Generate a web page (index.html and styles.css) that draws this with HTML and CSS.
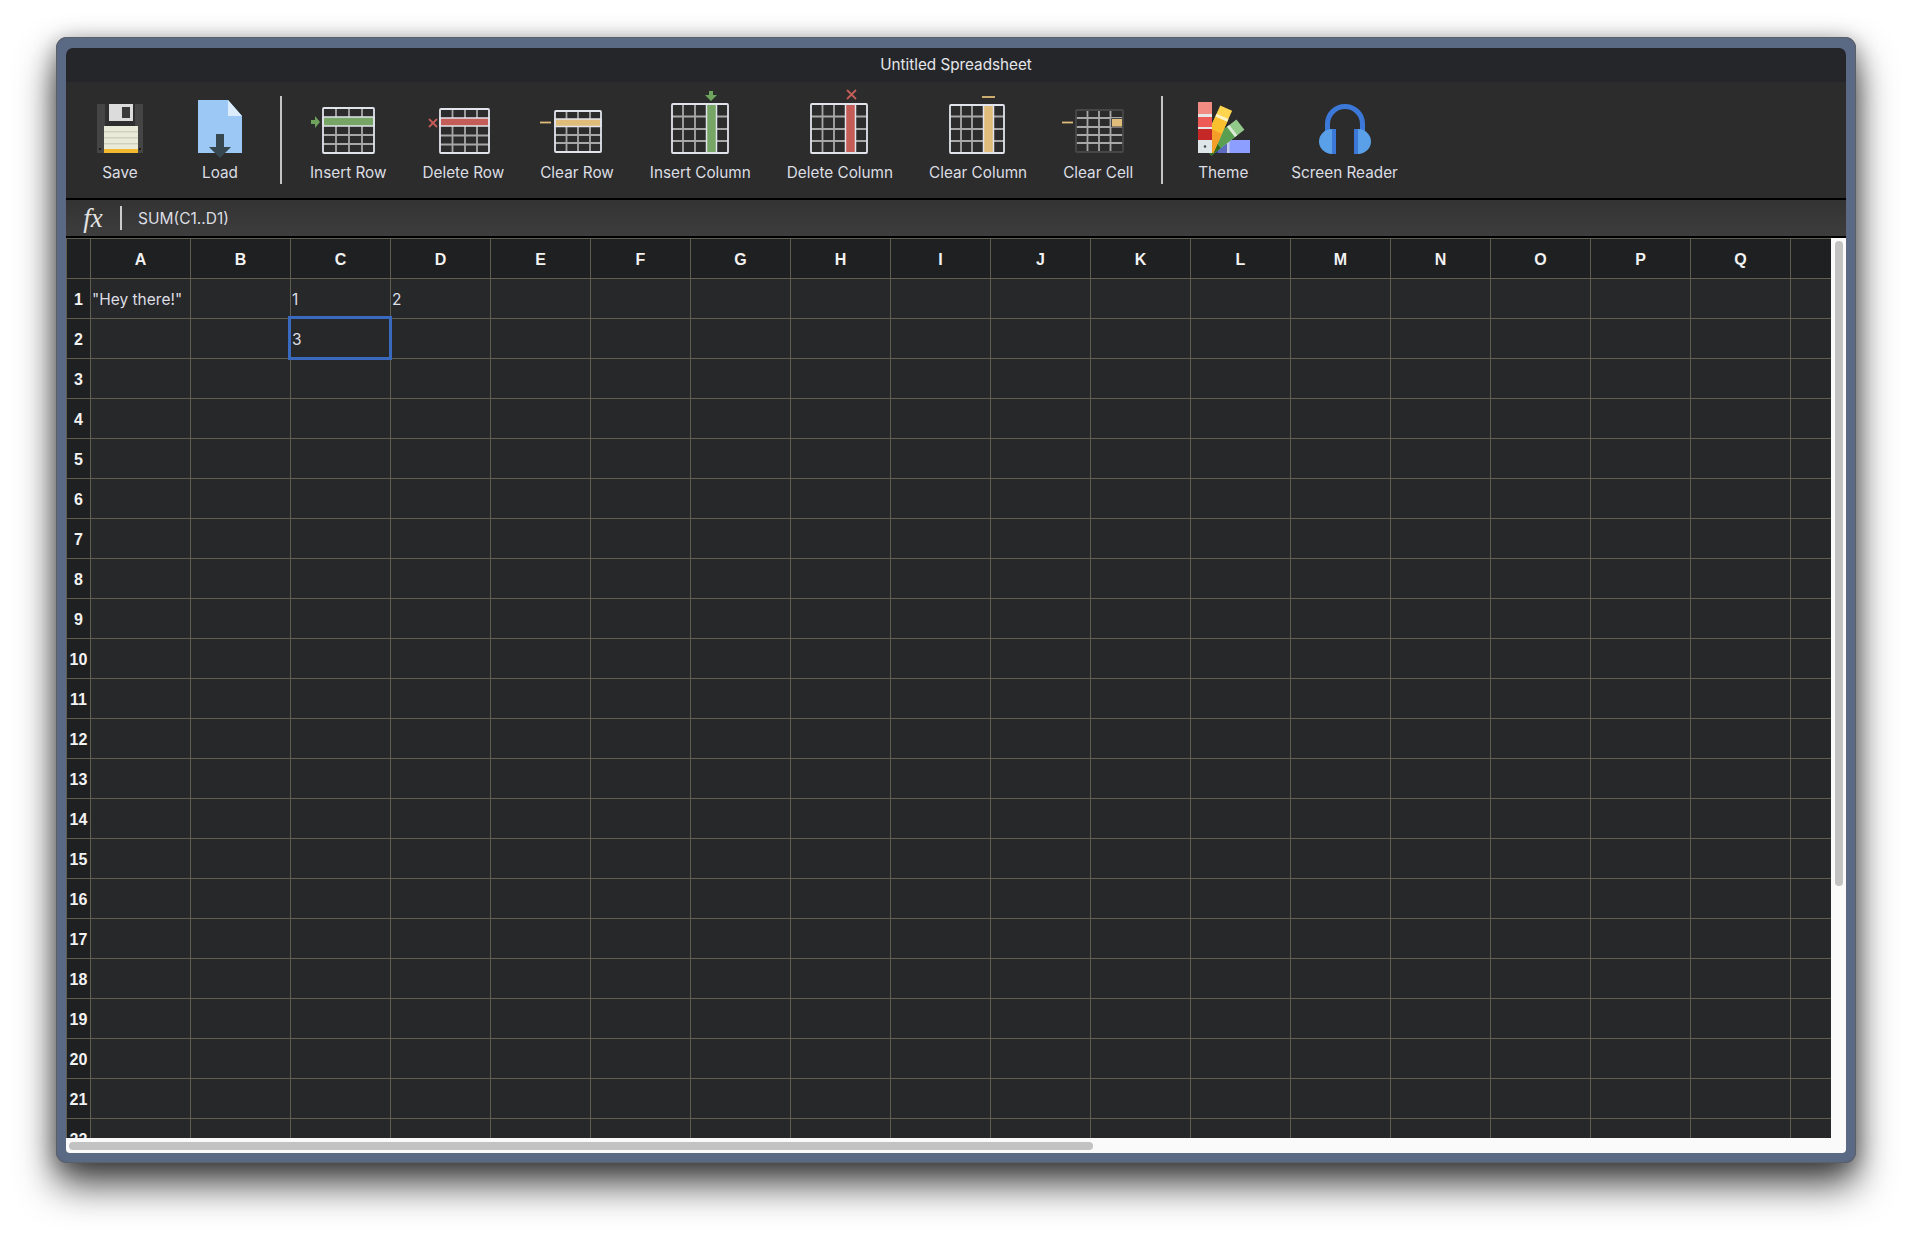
FILE: index.html
```html
<!DOCTYPE html>
<html lang="en">

<head>
    <meta charset="UTF-8">
    <title>Untitled Spreadsheet</title>
    <link rel="stylesheet" href="styles.css">
</head>

<body>
<div class="window">
    <div class="titlebar">Untitled Spreadsheet</div>

    <div class="toolbar">
        <div class="tool">
            <svg class="icon" viewBox="0 0 64 64">
                <path d="M9 8h46v49H9z" fill="#454545"/>
                <path d="M17 8h30v49H17z" fill="#2f2f2f"/>
                <path d="M21 8h24v17H21z" fill="#dcdcdc"/>
                <path d="M34 11h8v11h-8z" fill="#3a3a3a"/>
                <path d="M16 30h34v27H16z" fill="#e9ebd8"/>
                <path d="M16 35h34v1.500H16zM16 41h34v1.500H16zM16 47h34v1.500H16z" fill="#cfd3bd"/>
                <path d="M16 53h34v4H16z" fill="#f2b92f"/>
                <path d="M11 52h2v2h-2zM51 52h2v2h-2z" fill="#1c1c1c"/>
            </svg>
            <span>Save</span>
        </div>
        <div class="tool">
            <svg class="icon" viewBox="0 0 64 64">
                <path d="M10 4h30l14 16v37H10z" fill="#9bc8f5"/>
                <path d="M40 4l14 16H40z" fill="#dcecfb"/>
                <path d="M28 38h8v13h7L32 62 21 51h7z" fill="#37474f"/>
            </svg>
            <span>Load</span>
        </div>
        <div class="divider"></div>
        <div class="tool">
            <svg class="icon" viewBox="0 0 64 64">
                <path class="inner" d="M20 12v45M33 12v45M46 12v45M7 39h51M7 48h51"/>
                <path d="M7 21h51v9H7z" fill="#76a566" stroke="#e2e4ec" stroke-width="1.500"/>
                <rect class="outer" x="7" y="12" width="51" height="45" rx="1"/>
                <path d="M-5 24h4v-4l5 6-5 6v-4h-4z" fill="#6ea35e"/>
            </svg>
            <span>Insert Row</span>
        </div>
        <div class="tool">
            <svg class="icon" viewBox="0 0 64 64">
                <path class="inner" d="M21.500 13v45M34 13v45M46 13v45M9 39.500h49M9 48.500h49"/>
                <path d="M9 22h49v8H9z" fill="#c45c58" stroke="#e2e4ec" stroke-width="1.500"/>
                <rect class="outer" x="9" y="13" width="49" height="44" rx="1"/>
                <path d="M-2 23l8 8M6 23l-8 8" stroke="#c45c58" stroke-width="1.800" fill="none"/>
            </svg>
            <span>Delete Row</span>
        </div>
        <div class="tool">
            <svg class="icon" viewBox="0 0 64 64">
                <path class="inner" d="M21.500 15v42M33 15v42M45 15v42M10 39h46M10 47h46"/>
                <path d="M10 23h46v7.500H10z" fill="#dfbc79" stroke="#e2e4ec" stroke-width="1.500"/>
                <rect class="outer" x="10" y="15" width="46" height="41" rx="1"/>
                <path d="M-5 26.500H6" stroke="#dfbc79" stroke-width="1.800"/>
            </svg>
            <span>Clear Row</span>
        </div>
        <div class="tool">
            <svg class="icon" viewBox="0 0 64 64">
                <path class="inner" d="M4 20.500h56M4 33h56M4 45h56M15 8v49M27 8v49"/>
                <path d="M38.500 8h10v49h-10z" fill="#76a566" stroke="#e2e4ec" stroke-width="1.500"/>
                <rect class="outer" x="4" y="8" width="56" height="49" rx="1"/>
                <path d="M41 -5h4v4h4L43 5l-6-6h4z" fill="#6ea35e"/>
            </svg>
            <span>Insert Column</span>
        </div>
        <div class="tool">
            <svg class="icon" viewBox="0 0 64 64">
                <path class="inner" d="M3 20.500h56M3 33h56M3 45h56M14.500 8v49M26 8v49"/>
                <path d="M37.500 8h10v49h-10z" fill="#c45c58" stroke="#e2e4ec" stroke-width="1.500"/>
                <rect class="outer" x="3" y="8" width="56" height="49" rx="1"/>
                <path d="M39 -6l9 9M48 -6l-9 9" stroke="#c45c58" stroke-width="1.800" fill="none"/>
            </svg>
            <span>Delete Column</span>
        </div>
        <div class="tool">
            <svg class="icon" viewBox="0 0 64 64">
                <path class="inner" d="M4 20.500h54M4 33h54M4 45h54M15 9v48M26 9v48"/>
                <path d="M37.500 9h10v48h-10z" fill="#dfbc79" stroke="#e2e4ec" stroke-width="1.500"/>
                <rect class="outer" x="4" y="9" width="54" height="48" rx="1"/>
                <path d="M36 1h13" stroke="#dfbc79" stroke-width="1.800"/>
            </svg>
            <span>Clear Column</span>
        </div>
        <div class="tool">
            <svg class="icon" viewBox="0 0 64 64">
                <path class="inner" d="M10 22h47M10 31h47M10 39h47M10 47h47M21.500 14v42M33 14v42M44.500 14v42"/>
                <rect x="10" y="14" width="47" height="42" rx="1" fill="none" stroke="#474747" stroke-width="1.800"/>
                <path d="M45.500 22.500h11v8.500h-11z" fill="#dfbc79" stroke="#444" stroke-width="1"/>
                <path d="M-4 26.500H7" stroke="#dfbc79" stroke-width="1.800"/>
            </svg>
            <span>Clear Cell</span>
        </div>
        <div class="divider"></div>
        <div class="tool">
            <svg class="icon" viewBox="0 0 64 64">
                <path d="M22 44h37v13H22z" fill="#8c9eff"/>
                <path d="M22 44h14v13H22z" fill="#5c6bc0"/>
                <path d="M22 48h5v9h-5z" fill="#303f9f"/>
                <path d="M36 44h2.500v13H36z" fill="#c5cae9"/>
                <g transform="rotate(52 16 54)">
                    <path d="M10 12h13v42H10z" fill="#93c98a"/>
                    <path d="M10 24h13v30H10z" fill="#5a9e51"/>
                    <path d="M10 21h13v3H10z" fill="#dcebd8"/>
                    <path d="M10 42h13v12H10z" fill="#33691e"/>
                </g>
                <g transform="rotate(24 16 54)">
                    <path d="M10 8h13v46H10z" fill="#ffd54f"/>
                    <path d="M10 20h13v34H10z" fill="#fbc02d"/>
                    <path d="M10 17h13v3H10z" fill="#fff3c4"/>
                    <path d="M10 33h13v21H10z" fill="#f59f2a"/>
                </g>
                <path d="M7 6h14v12H7z" fill="#f28b82"/>
                <path d="M7 18h14v3H7z" fill="#e6e6e6"/>
                <path d="M7 21h14v10H7z" fill="#ee5a55"/>
                <path d="M7 31h14v2H7z" fill="#e6e6e6"/>
                <path d="M7 33h14v11H7z" fill="#c62828"/>
                <path d="M7 44h14v13H7z" fill="#dfe6ea"/>
                <circle cx="14" cy="50.500" r="1.200" fill="#37474f"/>
            </svg>
            <span>Theme</span>
        </div>
        <div class="tool">
            <svg class="icon" viewBox="0 0 64 64">
                <path d="M14.500 36V28a17.500 17.500 0 0 1 35 0v8" fill="none" stroke="#3b78d8" stroke-width="5"/>
                <path d="M19 33h4v25h-4a13 12.500 0 0 1 0-25zM45 33h-4v25h4a13 12.500 0 0 0 0-25z" fill="#5aa0e8"/>
                <path d="M19 33h4v25h-4zM41 33h4v25h-4z" fill="#3b78d8"/>
            </svg>
            <span>Screen Reader</span>
        </div>
    </div>

    <div class="formula">
        <span class="fx">fx</span>
        <div class="fx-sep"></div>
        <span class="formula-text">SUM(C1..D1)</span>
    </div>

    <div class="sheet">
        <div class="viewport">
            <div class="grid" id="grid"></div>
        </div>
        <div class="vtrack"><div class="vthumb"></div></div>
    </div>
    <div class="htrack"><div class="hthumb"></div></div>
</div>
<script src="grid.js"></script>
</body>

</html>
```

FILE: styles.css
```css
html {
    background: #fff;
}

body {
    box-sizing: border-box;
    margin: 0;
    height: 1237px;
    padding: 37px 0 0 56px;
    font-family: Inter, "Liberation Sans", sans-serif;
}

.window {
    box-sizing: border-box;
    width: 1800px;
    height: 1126px;
    padding: 11px 10px 10px;
    display: flex;
    flex-direction: column;
    background: #5a6a85;
    border-radius: 11px;
    box-shadow: inset 0 0 0 1px #5b5f68, 0 22px 38px rgba(0, 0, 0, .7), 0 4px 22px rgba(0, 0, 0, .35);
}

.titlebar {
    flex: none;
    height: 34px;
    line-height: 34px;
    text-align: center;
    font-size: 15.250px;
    color: #e4e6ea;
    background: #25262a;
    border-radius: 7px 7px 0 0;
}

.toolbar {
    flex: none;
    box-sizing: border-box;
    height: 118px;
    display: flex;
    align-items: flex-start;
    gap: 36px;
    padding: 14px 0 0 22px;
    background: #2c2c2c;
    border-bottom: 2px solid #000;
}

.tool {
    display: flex;
    flex-direction: column;
    align-items: center;
    min-width: 64px;
    padding-top: 1px;
    font-size: 15.300px;
    line-height: 24px;
    color: #dcdee4;
    white-space: nowrap;
}

.icon {
    display: block;
    width: 64px;
    height: 64px;
    margin-top: -1px;
    overflow: visible;
}

.icon + span {
    padding-top: 1px;
}

.icon .inner {
    fill: none;
    stroke: #a8a8a8;
    stroke-width: 1.800;
}

.icon .outer {
    fill: none;
    stroke: #e2e4ec;
    stroke-width: 1.800;
}

.divider {
    flex: none;
    width: 2px;
    height: 88px;
    margin: 0 -8px;
    background: #c4c4c4;
}

.formula {
    flex: none;
    height: 36px;
    display: flex;
    align-items: center;
    background: linear-gradient(#333, #3d3d3d);
}

.fx {
    width: 54px;
    text-align: center;
    font-family: "Liberation Serif", serif;
    font-style: italic;
    font-size: 27px;
    color: #e2e2e2;
}

.fx-sep {
    width: 2px;
    height: 24px;
    background: #ccc;
}

.formula-text {
    margin-left: 16px;
    font-size: 15.500px;
    color: #dcdee4;
}

.sheet {
    flex: 1;
    min-height: 0;
    display: flex;
    border-top: 2px solid #000;
}

.viewport {
    flex: 1;
    overflow: hidden;
    background: #27282a;
}

.grid {
    display: grid;
    grid-template-columns: 24px repeat(18, 100px);
    grid-auto-rows: 40px;
}

.cell {
    box-sizing: border-box;
    padding: 1px 0 0 1px;
    border-left: 1px solid #625e4f;
    border-top: 1px solid #625e4f;
    display: flex;
    align-items: center;
    font-size: 15.500px;
    color: #dcdee4;
    white-space: nowrap;
}

.head {
    padding: 2px 0 0;
    justify-content: center;
    font-family: "Liberation Sans", sans-serif;
    font-weight: 700;
    font-size: 16px;
    color: #f2f2f2;
    background: #1f2022;
}

.selected {
    position: relative;
    outline: 3px solid #3a6abf;
    outline-offset: -1px;
}

.vtrack {
    flex: none;
    width: 15px;
    background: #fafafa;
}

.vthumb {
    width: 8px;
    height: 645px;
    margin: 3px 0 0 4px;
    border-radius: 4px;
    background: #c2c2c2;
}

.htrack {
    flex: none;
    height: 15px;
    padding: 4px 0 0 3px;
    box-sizing: border-box;
    background: #fafafa;
    border-radius: 0 0 4px 4px;
}

.hthumb {
    width: 1024px;
    height: 8px;
    border-radius: 4px;
    background: #c2c2c2;
}
```

FILE: grid.js
```js
(function (d) {
    var grid = d.getElementById('grid');
    var letters = ' ABCDEFGHIJKLMNOPQR';
    var data = {
        'A1': '"Hey there!"',
        'C1': '1',
        'D1': '2',
        'C2': '3'
    };

    function add(text, cls) {
        var c = d.createElement('div');
        c.className = cls;
        c.textContent = text;
        grid.appendChild(c);
    }

    for (var i = 0; i < letters.length; i++) {
        var l = letters[i];
        add(l === ' ' || l === 'R' ? '' : l, 'cell head');
    }

    for (var r = 1; r <= 22; r++) {
        add(r, 'cell head');
        for (var j = 1; j < letters.length; j++) {
            var key = letters[j] + r;
            add(data[key] || '', key === 'C2' ? 'cell selected' : 'cell');
        }
    }
})(document);
```
